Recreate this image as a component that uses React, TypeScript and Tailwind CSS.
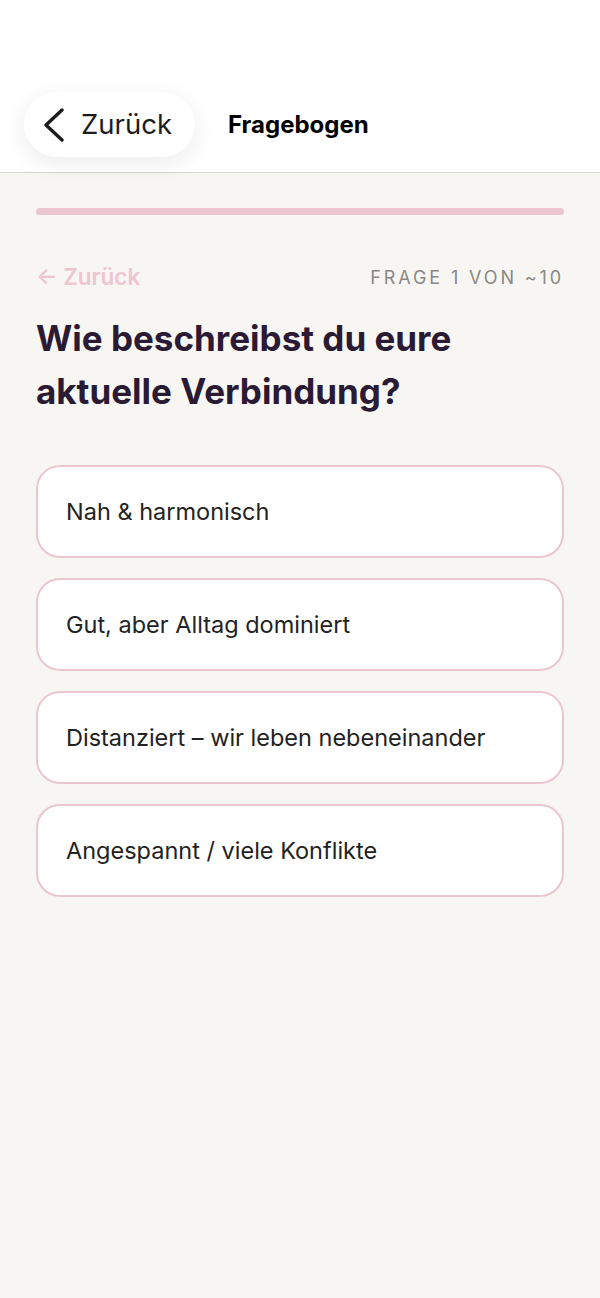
const options = [
  'Nah & harmonisch',
  'Gut, aber Alltag dominiert',
  'Distanziert – wir leben nebeneinander',
  'Angespannt / viele Konflikte',
];

export default function App() {
  return (
    <div className="min-h-[1298px] bg-[#f8f6f3] font-['Inter',sans-serif]">
      <header className="flex h-[173px] items-end border-b border-[#d6d6d6] bg-white px-6 pb-[15px]">
        <button
          type="button"
          className="flex h-[65px] w-[171px] items-center gap-[16px] rounded-full bg-white pl-[19px] shadow-[0_6px_24px_rgba(0,0,0,0.08)]"
        >
          <svg width="22" height="34" viewBox="0 0 22 34" fill="none" className="shrink-0">
            <polyline
              points="19,2 3,17 19,32"
              stroke="#1c1c1c"
              strokeWidth="3.4"
              strokeLinecap="round"
              strokeLinejoin="round"
            />
          </svg>
          <span className="text-[27.5px] text-[#1c1c1c]">Zurück</span>
        </button>
        <h1 className="ml-[33px] flex h-[65px] items-center text-[24px] font-bold text-black">Fragebogen</h1>
      </header>

      <main className="px-9 pt-[35px]">
        <div className="h-[7px] w-full rounded-full bg-[#ecc6cf]" />

        <div className="mt-[45px] flex h-[34px] items-center justify-between">
          <button type="button" className="text-[22.5px] font-semibold text-[#efc5d0]">
            ← Zurück
          </button>
          <span className="text-[18px] tracking-[0.16em] text-[#8a8784]">FRAGE 1 VON ~10</span>
        </div>

        <h2 className="mt-[18px] max-w-[470px] text-[35px] font-bold leading-[53px] text-[#2a1a33]">
          Wie beschreibst du eure aktuelle Verbindung?
        </h2>

        <ul className="mt-[47px] space-y-[20px]">
          {options.map((option) => (
            <li key={option}>
              <button
                type="button"
                className="flex h-[93px] w-full items-center rounded-[24px] border-2 border-[#ecc6cf] bg-white px-[28px] text-left text-[23.5px] text-[#222]"
              >
                {option}
              </button>
            </li>
          ))}
        </ul>
      </main>
    </div>
  );
}
